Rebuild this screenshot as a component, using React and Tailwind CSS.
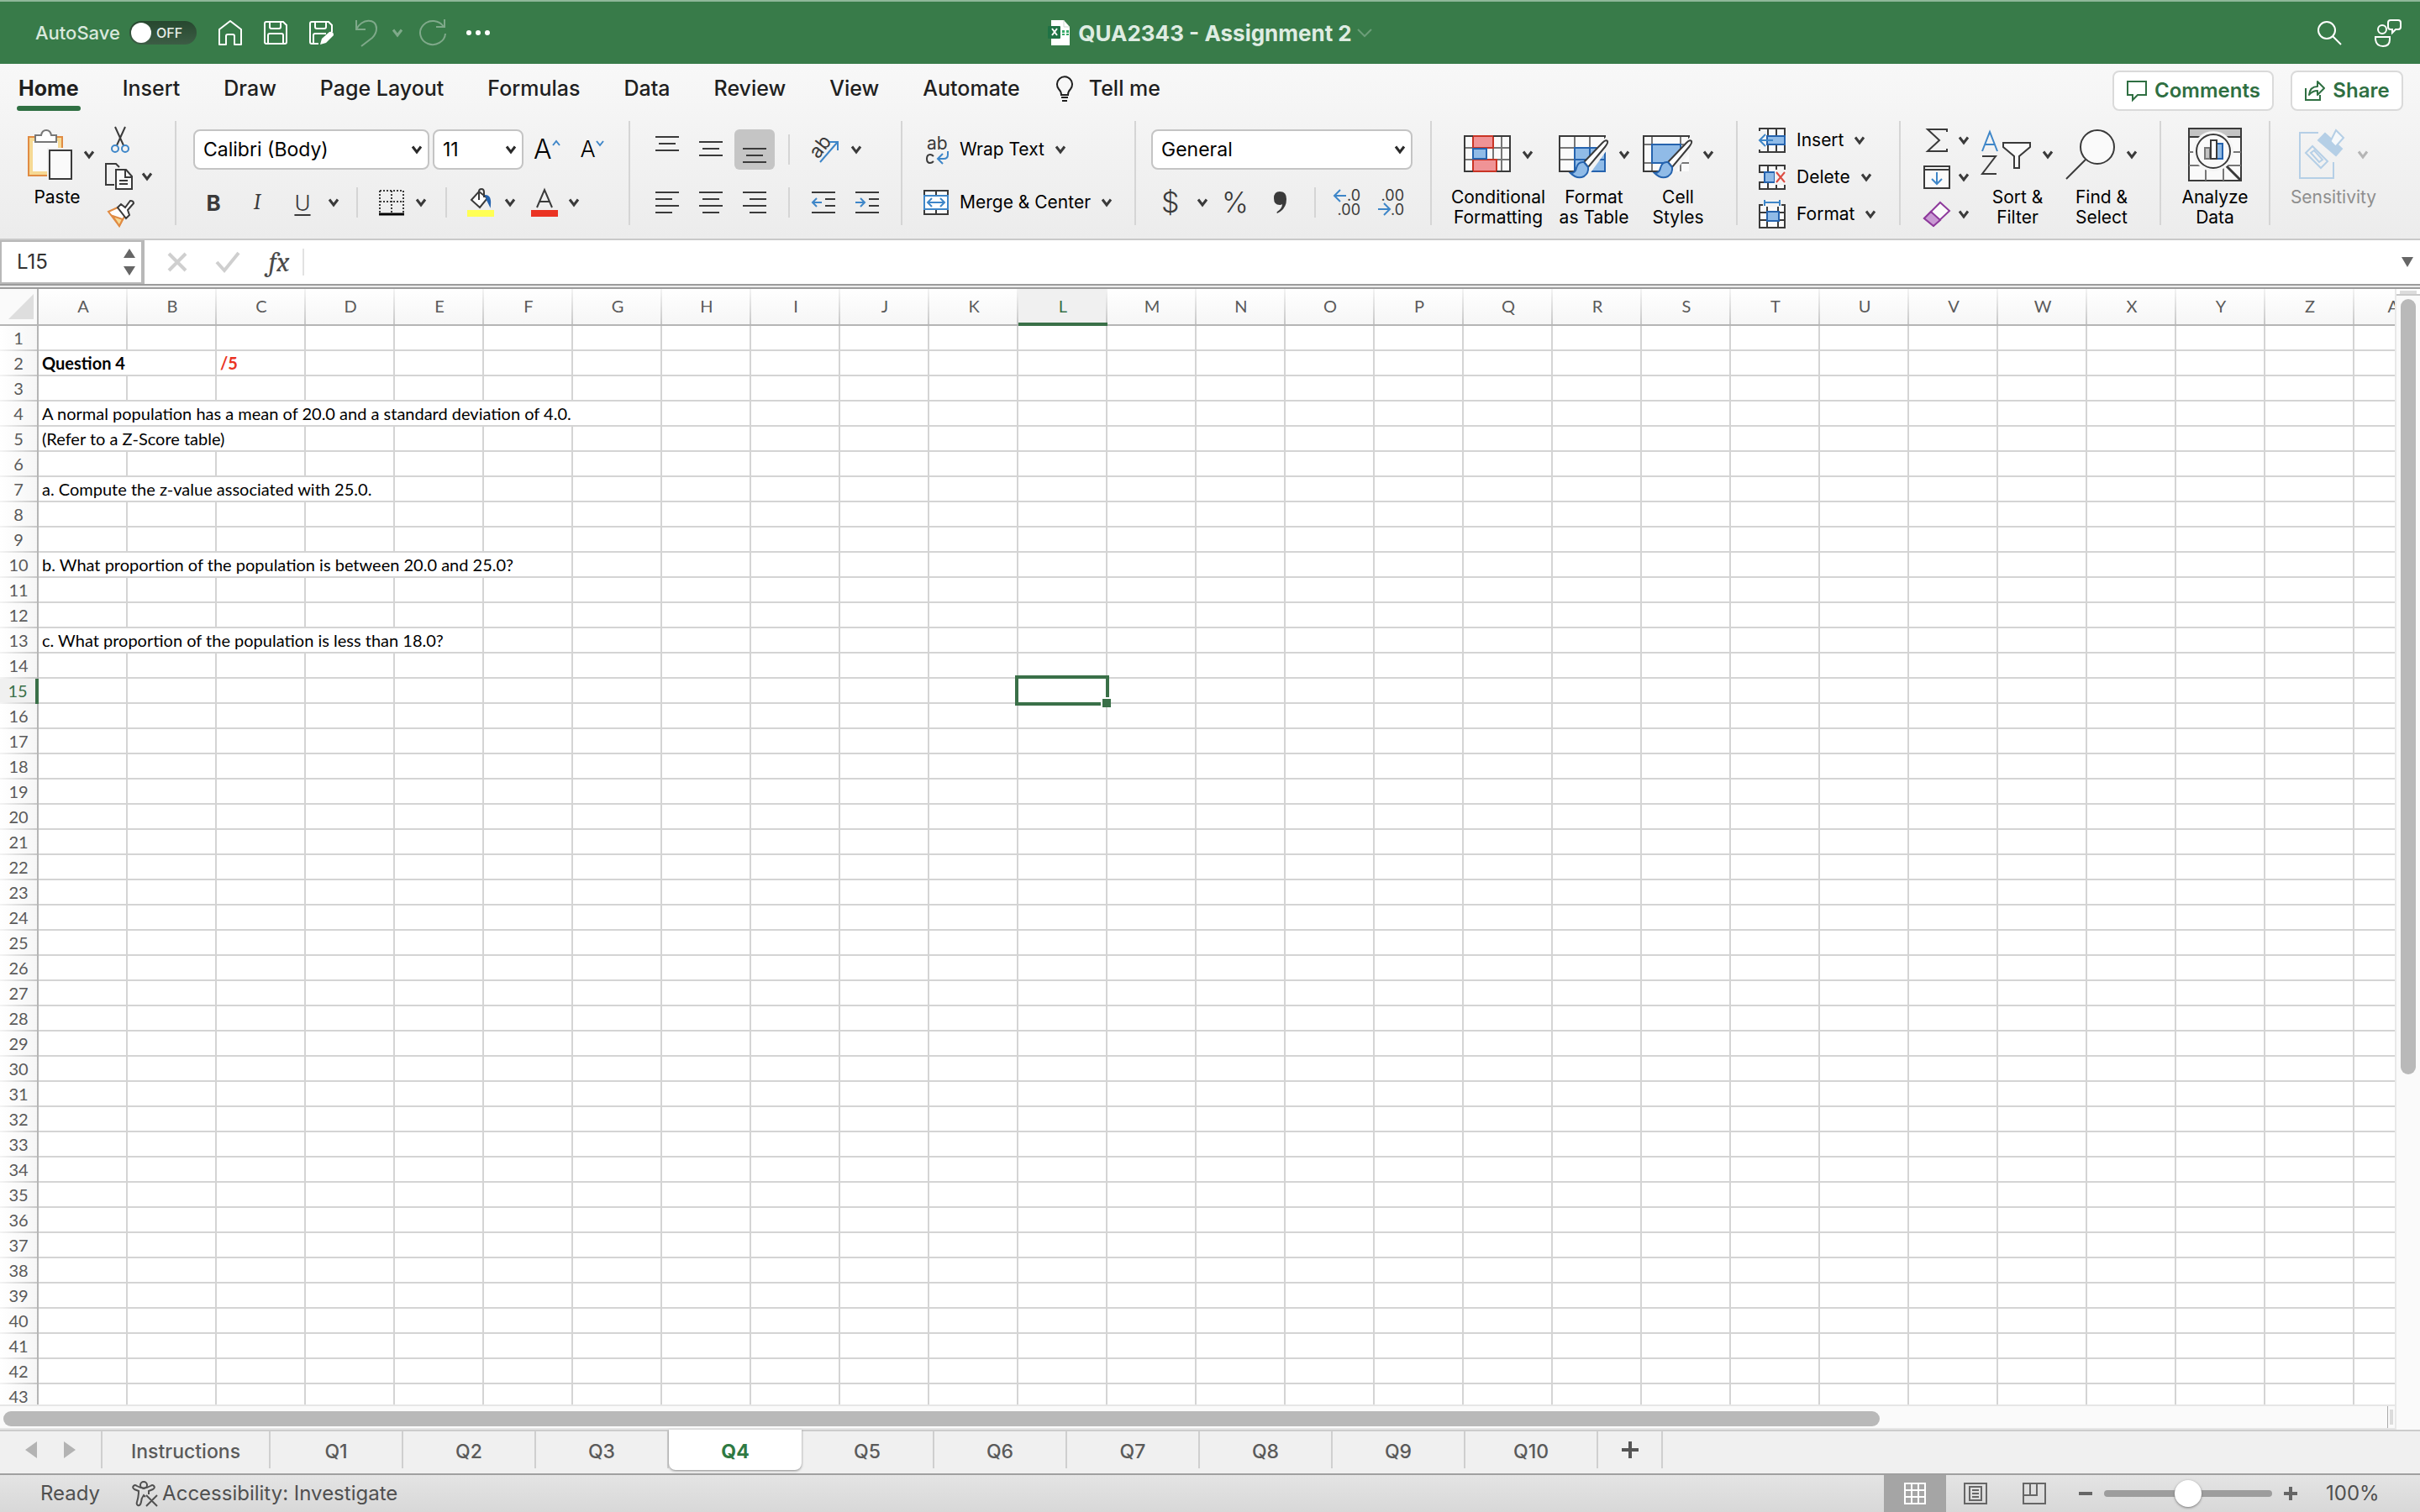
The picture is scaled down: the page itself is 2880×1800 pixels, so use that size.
import { useState } from "react";
import clsx from "clsx";

const COLUMNS = [..."ABCDEFGHIJKLMNOPQRSTUVWXYZ", "AA"];
const ROWS = Array.from({ length: 43 }, (_, i) => i + 1);
const MENU = ["Home", "Insert", "Draw", "Page Layout", "Formulas", "Data", "Review", "View", "Automate"];
const SHEETS = ["Instructions", "Q1", "Q2", "Q3", "Q4", "Q5", "Q6", "Q7", "Q8", "Q9", "Q10"];

// span = how many columns the text runs across
const CELLS = {
  A2: { text: "Question 4", span: 2, className: "font-bold" },
  C2: { text: "/5", span: 1, className: "font-bold text-[#ea3323]" },
  A4: { text: "A normal population has a mean of 20.0 and a standard deviation of 4.0.", span: 7 },
  A5: { text: "(Refer to a Z-Score table)", span: 3 },
  A7: { text: "a. Compute the z-value associated with 25.0.", span: 4 },
  A10: { text: "b. What proportion of the population is between 20.0 and 25.0?", span: 6 },
  A13: { text: "c. What proportion of the population is less than 18.0?", span: 5 },
};

const Svg = ({ w, h, sw = 2, className = "", children }) => (
  <svg
    width={w}
    height={h}
    viewBox={`0 0 ${w} ${h}`}
    fill="none"
    stroke="currentColor"
    strokeWidth={sw}
    className={clsx("shrink-0 overflow-visible", className)}
    aria-hidden="true"
  >
    {children}
  </svg>
);

const Chevron = ({ className = "text-[#3a3a3a]" }) => (
  <Svg w={14} h={10} sw={3} className={className}>
    <path d="M2 1.5 7 8l5-6.5" />
  </Svg>
);

/* ---------- Title bar ---------- */

const TitleBar = () => (
  <header className="flex h-[76px] shrink-0 items-center justify-between border-t-2 border-[#8fb79a] bg-[#387b49] text-white">
    <div className="flex w-[1200px] items-center pl-[42px]">
      <span id="autosave" className="w-28 text-[22px] font-medium text-[#d9e8dd]">
        AutoSave
      </span>
      <button
        role="switch"
        aria-checked="false"
        aria-labelledby="autosave"
        className="flex h-7 w-20 items-center gap-1.5 rounded-full bg-linear-to-b from-[#27472f] to-[#3c5d45] px-0.5 text-base font-medium text-[#e8efe9]"
      >
        <span className="size-6 rounded-full bg-white" />
        OFF
      </button>
      <div className="ml-6 flex items-center gap-[22px]">
        <button aria-label="Home">
          <Svg w={32} h={32}>
            <path d="M3 30V12L16 2l13 10v18h-8V20q0-2-2-2h-6q-2 0-2 2v10z" strokeLinejoin="round" />
          </Svg>
        </button>
        <button aria-label="Save">
          <Svg w={32} h={32}>
            <path d="M5 3h20l4 4v20q0 2-2 2H5q-2 0-2-2V5q0-2 2-2zM9 3v6q0 2 2 2h9q2 0 2-2V3M7 29V19q0-2 2-2h14q2 0 2 2v10" />
          </Svg>
        </button>
        <button aria-label="Save as">
          <Svg w={32} h={32}>
            <path d="M13 29H5q-2 0-2-2V5q0-2 2-2h20l4 4v8M9 3v6q0 2 2 2h9q2 0 2-2V3M7 29V19q0-2 2-2h13" />
            <path d="m15 30 2-7 9-8q5-1 5 4l-9 9z" fill="currentColor" stroke="none" />
          </Svg>
        </button>
      </div>
      <button aria-label="Undo" className="ml-6 text-[#7fa98a]">
        <Svg w={32} h={34}>
          <path d="M2 2v11h11M2 13C8 0 26 -1 26 12q0 6-5 11L8 33" />
        </Svg>
      </button>
      <button aria-label="Undo list" className="ml-3">
        <Chevron className="text-[#7fa98a]" />
      </button>
      <button aria-label="Redo" className="ml-[18px] text-[#7fa98a]">
        <Svg w={34} h={34}>
          <path d="M31 1v9H21M30 10A15 14 0 1 0 32 18" />
        </Svg>
      </button>
      <button aria-label="More commands" className="ml-[22px]">
        <Svg w={30} h={8}>
          <g fill="currentColor" stroke="none">
            <circle cx="4" cy="4" r="3" />
            <circle cx="15" cy="4" r="3" />
            <circle cx="26" cy="4" r="3" />
          </g>
        </Svg>
      </button>
    </div>

    <div className="flex items-center">
      <Svg w={26} h={30}>
        <path d="M4 0h15l7 8v22H4z" fill="#fff" stroke="none" />
        <path d="M19 0v8h7" stroke="#cfd8d2" strokeWidth="1" />
        <path d="M17 12h3v3h-3zM22 12h3v3h-3zM17 16h3v2h-3zM22 16h3v2h-3z" fill="#35a867" stroke="none" />
        <rect y="7" width="15" height="15" rx="1" fill="#1f7245" stroke="none" />
        <path d="m5 10 6 8M11 10l-6 8" stroke="#fff" />
      </Svg>
      <h1 className="ml-[10px] text-[26px] font-bold text-[#dfece2]">QUA2343 - Assignment 2</h1>
      <button aria-label="Document options" className="ml-1.5">
        <Svg w={18} h={12}>
          <path d="m1 2 8 8 8-8" stroke="#6c9e79" />
        </Svg>
      </button>
    </div>

    <div className="flex w-[1200px] items-center justify-end gap-9 pr-[22px]">
      <button aria-label="Search">
        <Svg w={32} h={32}>
          <circle cx="13" cy="13" r="10" />
          <path d="m20 20 10 10" />
        </Svg>
      </button>
      <button aria-label="Collaborate">
        <Svg w={34} h={34}>
          <circle cx="11" cy="13" r="5" />
          <path d="M3 22h17v3q0 8-8 8t-9-8zM21 2h9q3 0 3 3v5q0 3-3 3h-3l-4 4v-4h-2q-3 0-3-3V5q0-3 3-3z" />
        </Svg>
      </button>
    </div>
  </header>
);

/* ---------- Ribbon ---------- */

const MenuRow = () => (
  <nav className="flex h-[68px] items-start pl-5 pr-5">
    <div className="flex gap-12 pt-3">
      {MENU.map((name) => (
        <a
          key={name}
          href="#"
          className={clsx(
            "flex flex-col px-0.5 text-[25px] leading-[34px]",
            name === "Home" ? "font-bold" : "font-medium"
          )}
        >
          {name}
          {name === "Home" && <span className="-mx-0.5 mt-1 h-1.5 rounded-full bg-[#2f6f42]" />}
        </a>
      ))}
    </div>
    <button className="ml-10 flex items-center gap-[18px] pt-3 text-[25px] leading-[34px] font-medium">
      <Svg w={22} h={32}>
        <path d="M7 24q0-4-3-7a9 9 0 1 1 14 0q-3 3-3 7zM7 27h8M8 31h6" />
      </Svg>
      Tell me
    </button>
    <div className="ml-auto flex gap-5 pt-2 text-2xl font-semibold text-[#2f6f42]">
      <button className="flex h-12 w-48 items-center justify-center gap-2 rounded-lg border-2 border-[#dadada] bg-white">
        <Svg w={26} h={26}>
          <path d="M2 2h22v16H14l-6 6v-6H2z" />
        </Svg>
        Comments
      </button>
      <button className="flex h-12 w-[134px] items-center justify-center gap-2 rounded-lg border-2 border-[#dadada] bg-white">
        <Svg w={26} h={26}>
          <path d="M2 10v14h17v-6" />
          <path d="M6 18q1-10 10-10V2l8 8-8 8v-5q-6 0-10 5z" strokeLinejoin="round" />
        </Svg>
        Share
      </button>
    </div>
  </nav>
);

const Group = ({ className, children }) => (
  <div className={clsx("flex h-[124px] shrink-0 border-r-2 border-[#d5d5d5]", className)}>{children}</div>
);

const Rule = ({ className }) => <span className={clsx("h-9 w-0.5 shrink-0 bg-[#d5d5d5]", className)} />;

const BigButton = ({ icon, lines, chevron = true, chevronClass, className, labelClass }) => (
  <button className={clsx("flex shrink-0 flex-col items-center", className)}>
    <span className="flex h-[79px] shrink-0 items-center gap-3">
      {icon}
      {chevron && <Chevron className={chevronClass} />}
    </span>
    <span className={clsx("text-center text-[21px] leading-6 whitespace-nowrap", labelClass)}>
      {lines.map((line) => (
        <span key={line} className="block">
          {line}
        </span>
      ))}
    </span>
  </button>
);

const SelectBox = ({ label, value, className }) => (
  <span className={clsx("relative flex h-12 shrink-0 items-center", className)}>
    <select
      aria-label={label}
      className="size-full appearance-none rounded-lg border-2 border-[#c4c4c4] bg-white px-[10px] text-[23px]"
    >
      <option>{value}</option>
    </select>
    <Chevron className="pointer-events-none absolute right-2 text-[#2a2a2a]" />
  </span>
);

const IconButton = ({ label, className, children }) => (
  <button aria-label={label} className={clsx("flex shrink-0 items-center justify-center", className)}>
    {children}
  </button>
);

const Lines = ({ h = 28, rows }) => (
  <Svg w={28} h={h}>
    {rows.map(([x, y, w]) => (
      <path key={y} d={`M${x} ${y}h${w}`} />
    ))}
  </Svg>
);

const Brush = () => (
  <>
    <path d="M56 16 30 48l5 5 23-32z" fill="#f3f3f3" stroke="#f3f3f3" strokeWidth="6" />
    <path d="M59 15q-2-2-6 2L31 40l5 6 20-24q4-5 3-7z" fill="#fff" />
    <path d="M31 40q-7-1-9 7-1 6-7 6 8 8 16 4 6-4 5-11z" fill="#90bbe7" stroke="#2563ae" />
  </>
);

const PasteGroup = () => (
  <Group className="w-[210px] pl-8">
    <BigButton
      className="w-20"
      labelClass="pr-2"
      lines={["Paste"]}
      icon={
        <Svg w={56} h={62}>
          <path d="M30 56H3V10h40v14" fill="#f6d994" stroke="#e08b43" />
          <path d="M8 15h30v36H8z" fill="#fbfbfb" stroke="none" />
          <path d="M11 16V8h7q1-6 6-6t6 6h6v8z" fill="#fff" stroke="#777" />
          <path d="M28 26h26v34H28z" fill="#fff" stroke="#f1f1f1" strokeWidth="6" />
          <path d="M28 26h26v34H28z" fill="#fafafa" stroke="#3a3a3a" />
        </Svg>
      }
    />
    <div className="ml-3 flex flex-col text-[#3a3a3a]">
      <IconButton label="Cut" className="h-11 w-[38px]">
        <Svg w={24} h={34}>
          <path d="m6 2 10 22M18 2 8 24" />
          <g stroke="#3e86c8">
            <circle cx="6" cy="28" r="4" />
            <circle cx="18" cy="28" r="4" />
          </g>
        </Svg>
      </IconButton>
      <IconButton label="Copy" className="h-11 gap-2.5">
        <Svg w={34} h={34}>
          <path d="M12 27H2V2h12l4 4" />
          <path d="M14 9h12l7 8v15H14z" fill="#fafafa" />
          <path d="M25 9v9h8M18 22h10M18 26h10" />
        </Svg>
        <Chevron />
      </IconButton>
      <IconButton label="Format painter" className="h-11 w-[38px]">
        <Svg w={34} h={34}>
          <path d="m3 15 11-5 9 9-7 13z" fill="#fff" stroke="#e08b43" />
          <path d="m8 20 12 4-4 8z" fill="#f6d994" stroke="#e08b43" />
          <path d="m14 10 4-4 5 4 6-8q4 0 4 3l-7 8 2 6-4 4z" fill="#fff" />
        </Svg>
      </IconButton>
    </div>
  </Group>
);

const FontGroup = () => (
  <Group className="w-[540px] flex-col pt-[10px] pl-5 text-[#3a3a3a]">
    <div className="flex items-center text-black">
      <SelectBox label="Font" value="Calibri (Body)" className="w-[281px]" />
      <SelectBox label="Font size" value="11" className="ml-1 w-[108px]" />
      <IconButton label="Grow font" className="ml-3 text-[32px] font-light">
        A
        <Svg w={10} h={26} className="text-[#3e86c8]">
          <path d="m1 8 4-5 4 5" />
        </Svg>
      </IconButton>
      <IconButton label="Shrink font" className="ml-6 text-[27px] font-light">
        A
        <Svg w={10} h={26} className="text-[#3e86c8]">
          <path d="m1 3 4 5 4-5" />
        </Svg>
      </IconButton>
    </div>
    <div className="mt-5 flex h-[38px] items-center text-[26px]">
      <button className="w-12 font-bold">B</button>
      <button className="ml-1 w-12 font-serif italic">I</button>
      <button className="ml-2 w-11 font-light underline underline-offset-4">U</button>
      <Chevron className="ml-2 text-[#3a3a3a]" />
      <Rule className="ml-5" />
      <IconButton label="Borders" className="ml-6 gap-3">
        <Svg w={32} h={32}>
          <path d="M2 2h28v26M2 2v26M16 2v26M2 15h28" strokeDasharray="2 2" />
          <path d="M1 30h30" stroke="#000" strokeWidth="3" />
        </Svg>
        <Chevron />
      </IconButton>
      <Rule className="ml-[22px]" />
      <IconButton label="Fill color" className="ml-6 gap-3">
        <Svg w={32} h={34}>
          <path d="m5 14 9-10 10 8-9 11z" fill="#fff" />
          <path d="M14 14V4q0-3 3-3t3 4v6" />
          <path d="M21 9q7-1 6 11l-4-8" fill="#2563ae" stroke="#2563ae" />
          <path d="M0 30h32" stroke="#ffff54" strokeWidth="8" />
        </Svg>
        <Chevron />
      </IconButton>
      <IconButton label="Font color" className="ml-[18px] gap-3">
        <Svg w={32} h={34}>
          <path d="m7 23 9-21 9 21M10 16h12" />
          <path d="M0 30h32" stroke="#ea3323" strokeWidth="8" />
        </Svg>
        <Chevron />
      </IconButton>
    </div>
  </Group>
);

const AlignGroup = () => (
  <Group className="w-[324px] flex-col pt-[10px] pl-5 text-[#3a3a3a]">
    <div className="flex h-12 items-center gap-1">
      <IconButton label="Align top" className="h-12 w-12">
        <Lines h={34} rows={[[0, 2, 28], [4, 10, 20], [0, 18, 28]]} />
      </IconButton>
      <IconButton label="Align middle" className="h-12 w-12">
        <Lines h={34} rows={[[0, 8, 28], [4, 16, 20], [0, 24, 28]]} />
      </IconButton>
      <IconButton label="Align bottom" className="h-12 w-12 rounded-md bg-[#c5c5c5]">
        <Lines h={34} rows={[[0, 16, 28], [4, 24, 20], [0, 32, 28]]} />
      </IconButton>
      <Rule className="ml-3" />
      <IconButton label="Orientation" className="ml-5 gap-3">
        <Svg w={36} h={36}>
          <text x="2" y="26" fontSize="23" fill="currentColor" stroke="none" transform="rotate(-52 10 20)">
            ab
          </text>
          <path d="m12 33 20-23M23 9h10v10" stroke="#3e86c8" />
        </Svg>
        <Chevron />
      </IconButton>
    </div>
    <div className="mt-5 flex h-[38px] items-center gap-1">
      <IconButton label="Align left" className="w-12">
        <Lines rows={[[0, 2, 28], [0, 10, 20], [0, 18, 28], [0, 26, 20]]} />
      </IconButton>
      <IconButton label="Center" className="w-12">
        <Lines rows={[[0, 2, 28], [4, 10, 20], [0, 18, 28], [4, 26, 20]]} />
      </IconButton>
      <IconButton label="Align right" className="w-12">
        <Lines rows={[[0, 2, 28], [8, 10, 20], [0, 18, 28], [8, 26, 20]]} />
      </IconButton>
      <Rule className="ml-3" />
      <IconButton label="Decrease indent" className="ml-3 w-12">
        <Svg w={28} h={28}>
          <path d="M0 2h28M16 10h12M16 18h12M0 26h28" />
          <path d="M12 14H1m5-5-5 5 5 5" stroke="#3e86c8" />
        </Svg>
      </IconButton>
      <IconButton label="Increase indent" className="w-12">
        <Svg w={28} h={28}>
          <path d="M0 2h28M16 10h12M16 18h12M0 26h28" />
          <path d="M0 14h11m-5-5 5 5-5 5" stroke="#3e86c8" />
        </Svg>
      </IconButton>
    </div>
  </Group>
);

const WrapGroup = () => (
  <Group className="w-[278px] flex-col pt-[10px] pl-6 text-[21px]">
    <button className="flex h-12 items-center gap-3">
      <Svg w={32} h={36} className="text-[#3a3a3a]">
        <g fill="currentColor" stroke="none" fontSize="21">
          <text x="5" y="18">ab</text>
        </g>
        <path d="M13 26q-2-2-4-2-4 0-4 5t4 5q2 0 4-2" />
        <path d="M30 20v4q0 5-5 5h-7m6-6-6 6 6 6" stroke="#3e86c8" />
      </Svg>
      Wrap Text
      <Chevron />
    </button>
    <button className="mt-5 flex h-[38px] items-center gap-3">
      <Svg w={32} h={32} className="text-[#3a3a3a]">
        <path d="M2 2h28v28H2zM16 2v6M16 24v6" fill="#fafafa" />
        <path d="M2 8h28v16H2z" fill="#fff" stroke="#3e86c8" />
        <path d="M6 16h20m-15-5-5 5 5 5m10-10 5 5-5 5" stroke="#3e86c8" />
      </Svg>
      Merge &amp; Center
      <Chevron />
    </button>
  </Group>
);

const NumberGroup = () => (
  <Group className="w-[352px] flex-col pt-[10px] pl-[18px] text-[#3a3a3a]">
    <SelectBox label="Number format" value="General" className="w-[311px] text-black" />
    <div className="mt-5 flex h-[38px] items-center text-[34px] leading-[38px] font-light">
      <button aria-label="Currency" className="flex w-[68px] items-center justify-between pl-3">
        $
        <Chevron />
      </button>
      <button aria-label="Percent" className="ml-[14px] w-9">%</button>
      <IconButton label="Comma style" className="ml-6 w-6">
        <Svg w={20} h={28}>
          <path d="M9 1q8 0 8 9 0 12-11 17-1-1 0-2 6-4 6-9-1 1-3 1-7 0-7-8 0-8 7-8z" fill="currentColor" stroke="none" />
        </Svg>
      </IconButton>
      <Rule className="ml-7" />
      <IconButton label="Increase decimal" className="ml-[22px]">
        <Svg w={32} h={32}>
          <g fill="currentColor" stroke="none" fontSize="18" fontWeight="400">
            <text x="31" y="14" textAnchor="end">.0</text>
            <text x="31" y="31" textAnchor="end">.00</text>
          </g>
          <path d="M14 8H0m7-7-7 7 7 7" stroke="#3e86c8" />
        </Svg>
      </IconButton>
      <IconButton label="Decrease decimal" className="ml-5">
        <Svg w={32} h={32}>
          <g fill="currentColor" stroke="none" fontSize="18" fontWeight="400">
            <text x="31" y="14" textAnchor="end">.00</text>
            <text x="31" y="31" textAnchor="end">.0</text>
          </g>
          <path d="M0 24h14m-7-7 7 7-7 7" stroke="#3e86c8" />
        </Svg>
      </IconButton>
    </div>
  </Group>
);

const StylesGroup = () => (
  <Group className="w-[364px] gap-3.5 pl-[22px]">
    <BigButton
      className="w-[114px]"
      lines={["Conditional", "Formatting"]}
      icon={
        <Svg w={58} h={62} className="text-[#3a3a3a]">
          <path d="M2 9h54v42H2z" fill="#fafafa" />
          <path d="M2 23h54M2 37h54M12 9v42M36 9v42M46 9v42" stroke="#777" />
          <path d="M12 9h24v14H12zM12 37h28v14H12z" fill="#f09396" stroke="#c93425" />
          <path d="M12 24h16v12H12z" fill="#90bbe7" stroke="#2563ae" />
          <path d="M12 9H2v42h10M36 9h20v42H40" />
        </Svg>
      }
    />
    <BigButton
      className="w-[86px]"
      lines={["Format", "as Table"]}
      icon={
        <Svg w={60} h={62} className="text-[#3a3a3a]">
          <path d="M2 9h54v42H2z" fill="#fafafa" />
          <path d="M2 23h54M2 37h54M20 9v42M38 9v42" stroke="#777" />
          <path d="M20 23h36v28H20zM20 37h36M38 23v28" fill="#90bbe7" stroke="#2563ae" />
          <path d="M56 23V9H2v42h18" />
          <Brush />
        </Svg>
      }
    />
    <BigButton
      className="w-[86px]"
      lines={["Cell", "Styles"]}
      icon={
        <Svg w={60} h={62} className="text-[#3a3a3a]">
          <path d="M2 9h54v42H2z" fill="#fafafa" stroke="none" />
          <path d="M2 19h54M2 41h54M12 9v42M46 9v42" stroke="#777" />
          <path d="M12 19h34v22H12z" fill="#90bbe7" stroke="#2563ae" />
          <path d="M56 21V9H2v42h22" />
          <Brush />
        </Svg>
      }
    />
  </Group>
);

const CellsGroup = () => (
  <Group className="w-[194px] flex-col pt-px pl-6 text-[21px]">
    <button className="flex h-11 shrink-0 items-center gap-3">
      <Svg w={34} h={30} className="text-[#3a3a3a]">
        <path d="M2 1h30v28H2zM12 1v28M22 1v28" fill="#fafafa" />
        <path d="M11 10h21v10H11z" fill="#90bbe7" stroke="#2563ae" />
        <path d="M0 4h10v22H0z" fill="#f3f3f3" stroke="none" />
        <path d="M18 15H2m7-7-7 7 7 7" stroke="#3e86c8" />
      </Svg>
      Insert
      <Chevron />
    </button>
    <button className="flex h-11 shrink-0 items-center gap-3">
      <Svg w={34} h={30} className="text-[#3a3a3a]">
        <path d="M2 1h30v8H2zM2 21h30v8H2zM12 1v8M22 1v8M12 21v8M22 21v8" fill="#fafafa" />
        <path d="M8 9h12v12H8z" fill="#90bbe7" stroke="#2563ae" />
        <path d="M20 6h14v18H20z" fill="#f3f3f3" stroke="none" />
        <path d="m22 9 10 12M32 9 22 21" stroke="#dc4b41" />
      </Svg>
      Delete
      <Chevron />
    </button>
    <button className="flex h-11 shrink-0 items-center gap-3">
      <Svg w={34} h={34} className="text-[#3a3a3a]">
        <path d="M2 6h30v27H2zM2 15h30M2 24h30M11 6v27M24 6v27" fill="#fafafa" />
        <path d="M11 14h14v11H11z" fill="#90bbe7" stroke="#2563ae" />
        <path d="M6 0h22v8H6z" fill="#f3f3f3" stroke="none" />
        <path d="M8 3h18M8 0v7M26 0v7" stroke="#3e86c8" />
      </Svg>
      Format
      <Chevron />
    </button>
  </Group>
);

const EditingGroup = () => (
  <Group className="w-[310px] pl-[26px]">
    <div className="flex flex-col pt-px text-[#3a3a3a]">
      <IconButton label="AutoSum" className="h-11 gap-2">
        <Svg w={34} h={30}>
          <path d="M29 5V2H6l14 13L6 28h23v-3" />
        </Svg>
        <Chevron />
      </IconButton>
      <IconButton label="Fill" className="h-11 gap-2">
        <Svg w={34} h={30}>
          <path d="M2 2h30v26H2zM2 6h30" fill="#fafafa" />
          <path d="M17 9v14m-6-6 6 6 6-6" stroke="#3e86c8" />
        </Svg>
        <Chevron />
      </IconButton>
      <IconButton label="Clear" className="h-11 gap-2">
        <Svg w={34} h={32}>
          <path d="M21 2 32 12 13 30 2 21z" fill="#fafafa" stroke="#8e3a9c" />
          <path d="m10 13 11 10-8 7L2 21z" fill="#c99ad3" stroke="#8e3a9c" />
        </Svg>
        <Chevron />
      </IconButton>
    </div>
    <BigButton
      className="ml-3 w-[90px]"
      lines={["Sort &", "Filter"]}
      icon={
        <Svg w={60} h={62} className="text-[#3a3a3a]">
          <path d="m1 27 9-23 9 23M5 19h11" stroke="#3e86c8" />
          <path d="M1 33h16L1 54h17" />
          <path d="M26 17h32v5L45 33v14h-6V33L26 22z" fill="#fafafa" />
        </Svg>
      }
    />
    <BigButton
      className="ml-3 w-[86px]"
      lines={["Find &", "Select"]}
      icon={
        <Svg w={60} h={62} className="text-[#3a3a3a]">
          <circle cx="38" cy="22" r="20" fill="#fafafa" />
          <path d="M24 37 1 60" />
        </Svg>
      }
    />
  </Group>
);

const Ribbon = () => (
  <section className="shrink-0 border-b-2 border-[#c9c9c9] bg-linear-to-b from-[#f8f8f8] via-[#f2f2f2] to-[#ececec] text-[#1f1f1f]">
    <MenuRow />
    <div className="flex pb-4 text-black">
      <PasteGroup />
      <FontGroup />
      <AlignGroup />
      <WrapGroup />
      <NumberGroup />
      <StylesGroup />
      <CellsGroup />
      <EditingGroup />
      <Group className="w-[130px] justify-center">
        <BigButton
          chevron={false}
          lines={["Analyze", "Data"]}
          icon={
            <Svg w={66} h={66} className="text-[#3a3a3a]">
              <path d="M2 2h62v62H2z" fill="#fafafa" />
              <path d="M2 2h62v10H2z" fill="#c4c4c4" />
              <path d="M2 30h62M2 46h62M22 46v18M43 46v18" stroke="#777" />
              <path d="m44 44 20 20" strokeWidth="3" />
              <circle cx="31" cy="29" r="23" fill="#fafafa" stroke="#f5f5f5" strokeWidth="2" />
              <circle cx="31" cy="29" r="20" fill="#fafafa" />
              <path d="M21 25h6v13h-6z" fill="#c4c4c4" stroke="#777" />
              <path d="M35 20h7v18h-7z" fill="#90bbe7" stroke="#2563ae" />
              <path d="M28 16h7v22h-7z" fill="#fff" />
            </Svg>
          }
        />
      </Group>
      <BigButton
        className="ml-[22px] w-[106px] text-[#8e8e8e]"
        chevronClass="text-[#b5b5b5]"
        lines={["Sensitivity"]}
        icon={
          <Svg w={58} h={62} className="text-[#b5cfe6]">
            <path d="M24 5H2v54h40V40" />
            <path d="m9 29 8-8 18 18-8 8zM15 29l4-3 10 11-4 3z" />
            <path d="m24 14 8-8 20 18-7 8z" fill="currentColor" />
            <path d="m31 6 8 8 6-12 9 9-9 10 5 5" fill="#f6f9fb" />
          </Svg>
        }
      />
    </div>
  </section>
);

/* ---------- Formula bar ---------- */

const FormulaBar = () => (
  <div className="flex h-[52px] shrink-0 items-stretch bg-white">
    <div className="flex w-[172px] items-center justify-between border-2 border-r-4 border-[#b8b8b8] pr-1.5 pl-[18px]">
      <input aria-label="Name box" defaultValue="L15" className="w-24 bg-transparent text-2xl text-[#333] outline-none" />
      <button aria-label="Name box list" className="text-[#666]">
        <Svg w={16} h={34}>
          <path d="m8 1 7 11H1zM8 33 1 22h14z" fill="currentColor" stroke="none" />
        </Svg>
      </button>
    </div>
    <div className="flex items-center text-[#cfcfcf]">
      <IconButton label="Cancel" className="ml-[26px]">
        <Svg w={26} h={26} sw={4}>
          <path d="m3 3 20 20M23 3 3 23" />
        </Svg>
      </IconButton>
      <IconButton label="Enter" className="ml-8">
        <Svg w={30} h={26} sw={4}>
          <path d="m2 13 9 10L28 2" />
        </Svg>
      </IconButton>
      <button
        aria-label="Insert function"
        className="ml-6 w-11 text-center font-serif text-[34px] leading-10 text-[#4a4a4a] italic"
      >
        fx
      </button>
      <span className="ml-1.5 h-8 w-0.5 bg-[#e2e2e2]" />
    </div>
    <input aria-label="Formula" className="ml-3 min-w-0 flex-1 bg-transparent text-2xl outline-none" />
    <button aria-label="Expand formula bar" className="px-[7px] text-[#666]">
      <Svg w={16} h={14}>
        <path d="M1 1h14L8 13z" fill="currentColor" stroke="none" />
      </Svg>
    </button>
  </div>
);

/* ---------- Sheet ---------- */

const Row = ({ row }) => {
  const cells = [];
  for (let i = 0; i < COLUMNS.length; ) {
    const id = COLUMNS[i] + row;
    const cell = CELLS[id];
    cells.push(
      <td
        key={id}
        colSpan={cell?.span}
        className={clsx(
          "border-r-2 border-b-2 border-[#d4d4d4] p-0 pl-1 whitespace-nowrap",
          cell?.className,
          id === "L15" && "relative"
        )}
      >
        {cell?.text}
        {id === "L15" && (
          <span className="absolute -inset-1 border-4 border-[#3a7048]">
            <span className="absolute -right-1.5 -bottom-1.5 size-3 border-t-2 border-l-2 border-white bg-[#3a7048]" />
          </span>
        )}
      </td>
    );
    i += cell?.span ?? 1;
  }
  const active = row === 15;
  return (
    <tr className="h-[30px]">
      <th
        className={clsx(
          "relative p-0 pb-0.5 font-normal after:absolute after:inset-x-0 after:bottom-0 after:h-0.5 after:bg-linear-to-r after:from-[#f4f4f4] after:to-[#c8c8c8]",
          active
            ? "border-r-4 border-[#3a7048] bg-[#f0f0f0] text-[#3a7048]"
            : "border-r-2 border-[#b5b5b5] bg-linear-to-r from-white to-[#f6f6f6] text-[#5a5a5a]"
        )}
      >
        {row}
      </th>
      {cells}
    </tr>
  );
};

const Sheet = () => (
  <div className="flex min-h-0 flex-1 border-t-2 border-[#9c9c9c]">
    <div className="flex min-w-0 flex-1 flex-col">
      <div className="min-h-0 flex-1 overflow-hidden">
        <table className="w-[2908px] table-fixed border-separate border-spacing-0 font-[Lato,sans-serif] text-xl leading-7 text-black">
          <colgroup>
            <col className="w-[46px]" />
            {COLUMNS.map((c) => (
              <col key={c} className="w-[106px]" />
            ))}
          </colgroup>
          <thead>
            <tr className="h-11">
              <td className="border-r-2 border-b-2 border-[#b5b5b5] bg-[#fafafa] p-0 pl-[10px]">
                <Svg w={30} h={30}>
                  <path d="M30 0v30H0z" fill="#dedede" stroke="none" />
                </Svg>
              </td>
              {COLUMNS.map((c) => (
                <th
                  key={c}
                  className={clsx(
                    "relative p-0 font-normal after:absolute after:inset-y-0 after:right-0 after:w-0.5 after:bg-linear-to-b after:from-[#f4f4f4] after:to-[#c8c8c8]",
                    c === "L"
                      ? "border-b-4 border-[#3a7048] bg-[#f0f0f0] text-[#3a7048]"
                      : "border-b-2 border-[#b5b5b5] bg-linear-to-b from-white to-[#f6f6f6] pb-0.5 text-[#5a5a5a]"
                  )}
                >
                  {c}
                </th>
              ))}
            </tr>
          </thead>
          <tbody>
            {ROWS.map((row) => (
              <Row key={row} row={row} />
            ))}
          </tbody>
        </table>
      </div>
      <div className="flex h-[30px] shrink-0 border-y-2 border-[#e6e6e6] bg-[#fafafa]">
        <div className="flex flex-1 items-end border-r border-[#aaa] pb-0.5 pl-1">
          <span className="h-[18px] w-[78.7%] rounded-full bg-[#b9b9b9]" />
        </div>
        <span className="mx-0.5 my-1 w-1 bg-[#dcdcdc]" />
      </div>
    </div>
    <div className="flex w-[30px] shrink-0 flex-col items-center border-l-2 border-[#e8e8e8] bg-[#fafafa]">
      <div className="h-2 w-full border-b-2 border-[#c9c9c9] bg-white px-1 pt-0.5">
        <span className="block h-1 bg-[#dcdcdc]" />
      </div>
      <span className="mt-1 h-[68%] w-[18px] rounded-full bg-[#b9b9b9]" />
    </div>
  </div>
);

const SheetTabs = ({ current, onSelect }) => (
  <nav className="flex h-[54px] shrink-0 items-start border-t-2 border-b-2 border-t-[#cccccc] border-b-[#a0a0a0] bg-[#f0f0f0] text-[#5a5a5a]">
    <div className="flex h-11 w-[122px] items-center justify-center gap-8 border-r-2 border-[#cfcfcf] text-[#b3b3b3]">
      <IconButton label="Previous sheet">
        <Svg w={14} h={22}>
          <path d="M14 1v20L0 11z" fill="currentColor" stroke="none" />
        </Svg>
      </IconButton>
      <IconButton label="Next sheet">
        <Svg w={14} h={22}>
          <path d="M0 1v20l14-10z" fill="currentColor" stroke="none" />
        </Svg>
      </IconButton>
    </div>
    {SHEETS.map((name) => (
      <button
        key={name}
        onClick={() => onSelect(name)}
        className={clsx(
          "shrink-0 pt-1 text-[23px]",
          name === "Instructions" ? "w-[200px]" : "w-[158px]",
          name === current
            ? "-mt-0.5 h-12 rounded-b-lg bg-white font-bold text-[#2f7a43] shadow-[0_1px_3px_#888]"
            : "h-11 border-r-2 border-[#cfcfcf] font-medium"
        )}
      >
        {name}
      </button>
    ))}
    <IconButton label="Add sheet" className="h-11 w-[77px] border-r-2 border-[#cfcfcf] text-[#555]">
      <Svg w={22} h={22} sw={4}>
        <path d="M11 1v20M1 11h20" />
      </Svg>
    </IconButton>
  </nav>
);

const StatusBar = () => (
  <footer className="flex h-11 shrink-0 items-center justify-between bg-linear-to-b from-[#e4e4e4] to-[#d8d8d8] text-2xl text-[#505050]">
    <div className="flex items-center pl-12">
      <span>Ready</span>
      <button className="ml-[38px] flex items-center gap-1">
        <Svg w={32} h={32}>
          <circle cx="14" cy="6" r="4" />
          <path d="M16 20 14 18q-3 4-3 8-1 5-4 4-2-1-1-4 2-6 2-13L3 11q-3-2-1-4 1-2 4 0 8 5 16 0 3-2 4 0 2 2-1 4l-5 2v4M17 18l13 13M30 18 17 31" />
        </Svg>
        Accessibility: Investigate
      </button>
    </div>
    <div className="flex items-center text-[#666]">
      <IconButton label="Normal view" className="h-11 w-[74px] bg-[#a5a5a5] text-white">
        <Svg w={28} h={28}>
          <path d="M2 2h24v24H2zM10 2v24M18 2v24M2 10h24M2 18h24" />
        </Svg>
      </IconButton>
      <IconButton label="Page layout view" className="h-11 w-[70px]">
        <Svg w={28} h={28}>
          <path d="M1 2h26v24H1zM7 6h14v16H7zM10 10h8M10 14h8M10 18h8" />
        </Svg>
      </IconButton>
      <IconButton label="Page break view" className="h-11 w-[70px]">
        <Svg w={28} h={28}>
          <path d="M1 2h26v24H1zM9 2v14M17 2v14H1" />
        </Svg>
      </IconButton>
      <IconButton label="Zoom out" className="ml-4">
        <Svg w={20} h={20} sw={4}>
          <path d="M2 10h16" />
        </Svg>
      </IconButton>
      <input
        type="range"
        aria-label="Zoom"
        defaultValue={50}
        className="ml-3 h-2 w-[200px] appearance-none rounded-full bg-[#9d9d9d] [&::-webkit-slider-thumb]:size-8 [&::-webkit-slider-thumb]:appearance-none [&::-webkit-slider-thumb]:rounded-full [&::-webkit-slider-thumb]:bg-white [&::-webkit-slider-thumb]:shadow-[0_1px_3px_#777]"
      />
      <IconButton label="Zoom in" className="ml-3">
        <Svg w={20} h={20} sw={4}>
          <path d="M10 2v16M2 10h16" />
        </Svg>
      </IconButton>
      <span className="ml-8 w-28 text-[#505050]">100%</span>
    </div>
  </footer>
);

export default function App() {
  const [sheet, setSheet] = useState("Q4");

  return (
    <div className="flex h-screen flex-col overflow-hidden bg-white font-[Inter,sans-serif]">
      <TitleBar />
      <Ribbon />
      <FormulaBar />
      <div className="h-1 shrink-0 border-t-2 border-[#9c9c9c] bg-[#ececec]" />
      <Sheet />
      <SheetTabs current={sheet} onSelect={setSheet} />
      <StatusBar />
    </div>
  );
}
